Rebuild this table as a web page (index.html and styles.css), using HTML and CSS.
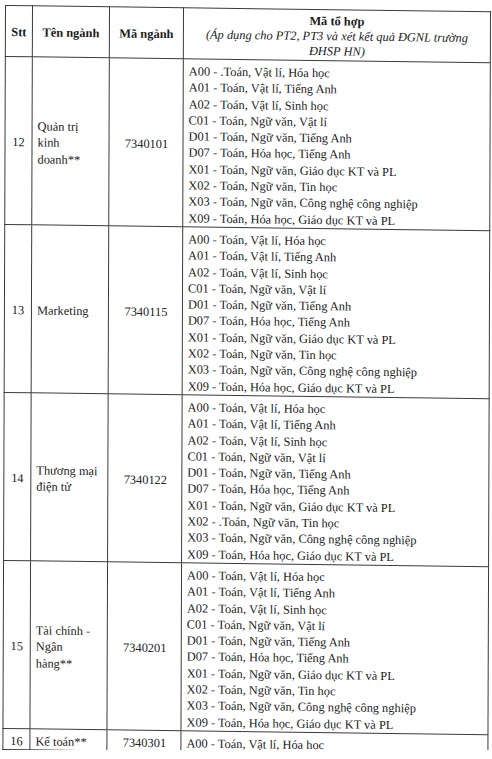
FILE: index.html
```html
<!DOCTYPE html>
<html lang="vi">
<head>
<meta charset="utf-8">
<title>Mã tổ hợp</title>
<link rel="stylesheet" href="styles.css">
</head>
<body>
<table class="grid">
  <colgroup>
    <col class="c-stt"><col class="c-name"><col class="c-code"><col class="c-combo">
  </colgroup>
  <thead>
    <tr>
      <th class="h-stt">Stt</th>
      <th>Tên ngành</th>
      <th>Mã ngành</th>
      <th class="h-combo"><b>Mã tổ hợp</b><br><i>(Áp dụng cho PT2, PT3 và xét kết quả ĐGNL trường<br>ĐHSP HN)</i></th>
    </tr>
  </thead>
  <tbody>
    <tr class="row">
      <td class="stt">12</td>
      <td class="name">Quản trị<br>kinh<br>doanh**</td>
      <td class="code">7340101</td>
      <td class="combo">
        <div>A00 - .Toán, Vật lí, Hóa học</div>
        <div>A01 - Toán, Vật lí, Tiếng Anh</div>
        <div>A02 - Toán, Vật lí, Sinh học</div>
        <div>C01 - Toán, Ngữ văn, Vật lí</div>
        <div>D01 - Toán, Ngữ văn, Tiếng Anh</div>
        <div>D07 - Toán, Hóa học, Tiếng Anh</div>
        <div>X01 - Toán, Ngữ văn, Giáo dục KT và PL</div>
        <div>X02 - Toán, Ngữ văn, Tin học</div>
        <div>X03 - Toán, Ngữ văn, Công nghệ công nghiệp</div>
        <div>X09 - Toán, Hóa học, Giáo dục KT và PL</div>
      </td>
    </tr>
    <tr class="row">
      <td class="stt">13</td>
      <td class="name">Marketing</td>
      <td class="code">7340115</td>
      <td class="combo">
        <div>A00 - Toán, Vật lí, Hóa học</div>
        <div>A01 - Toán, Vật lí, Tiếng Anh</div>
        <div>A02 - Toán, Vật lí, Sinh học</div>
        <div>C01 - Toán, Ngữ văn, Vật lí</div>
        <div>D01 - Toán, Ngữ văn, Tiếng Anh</div>
        <div>D07 - Toán, Hóa học, Tiếng Anh</div>
        <div>X01 - Toán, Ngữ văn, Giáo dục KT và PL</div>
        <div>X02 - Toán, Ngữ văn, Tin học</div>
        <div>X03 - Toán, Ngữ văn, Công nghệ công nghiệp</div>
        <div>X09 - Toán, Hóa học, Giáo dục KT và PL</div>
      </td>
    </tr>
    <tr class="row">
      <td class="stt">14</td>
      <td class="name">Thương mại<br>điện tử</td>
      <td class="code">7340122</td>
      <td class="combo">
        <div>A00 - Toán, Vật lí, Hóa học</div>
        <div>A01 - Toán, Vật lí, Tiếng Anh</div>
        <div>A02 - Toán, Vật lí, Sinh học</div>
        <div>C01 - Toán, Ngữ văn, Vật lí</div>
        <div>D01 - Toán, Ngữ văn, Tiếng Anh</div>
        <div>D07 - Toán, Hóa học, Tiếng Anh</div>
        <div>X01 - Toán, Ngữ văn, Giáo dục KT và PL</div>
        <div>X02 - .Toán, Ngữ văn, Tin học</div>
        <div>X03 - Toán, Ngữ văn, Công nghệ công nghiệp</div>
        <div>X09 - Toán, Hóa học, Giáo dục KT và PL</div>
      </td>
    </tr>
    <tr class="row">
      <td class="stt">15</td>
      <td class="name">Tài chính -<br>Ngân<br>hàng**</td>
      <td class="code">7340201</td>
      <td class="combo">
        <div>A00 - Toán, Vật lí, Hóa học</div>
        <div>A01 - Toán, Vật lí, Tiếng Anh</div>
        <div>A02 - Toán, Vật lí, Sinh học</div>
        <div>C01 - Toán, Ngữ văn, Vật lí</div>
        <div>D01 - Toán, Ngữ văn, Tiếng Anh</div>
        <div>D07 - Toán, Hóa học, Tiếng Anh</div>
        <div>X01 - Toán, Ngữ văn, Giáo dục KT và PL</div>
        <div>X02 - Toán, Ngữ văn, Tin học</div>
        <div>X03 - Toán, Ngữ văn, Công nghệ công nghiệp</div>
        <div>X09 - Toán, Hóa học, Giáo dục KT và PL</div>
      </td>
    </tr>
    <tr class="row">
      <td class="stt">16</td>
      <td class="name">Kế toán**</td>
      <td class="code">7340301</td>
      <td class="combo">
        <div>A00 - Toán, Vật lí, Hóa học</div>
      </td>
    </tr>
  </tbody>
</table>
</body>
</html>
```

FILE: styles.css
```css
html, body {
  margin: 0;
  padding: 0;
  background: #ffffff;
}

body {
  padding: 5px 0 0 5px;
  font-family: "Liberation Serif", "Times New Roman", serif;
  font-size: 12.4px;
  color: #1a1a1a;
}

.grid {
  border-collapse: collapse;
  table-layout: fixed;
  width: 485px;
  transform-origin: 0 0;
  transform: matrix(1, 0.013, -0.0035, 1, 0, 0);
}

.c-stt { width: 27px; }
.c-name { width: 77px; }
.c-code { width: 74px; }
.c-combo { width: 307px; }

.grid th,
.grid td {
  border: 1px solid #3a3a3a;
  vertical-align: middle;
}

.grid th {
  font-weight: bold;
  line-height: 15px;
  height: 45px;
  padding: 4px 4px 1px;
  text-align: center;
}

.grid th.h-combo {
  font-weight: normal;
}

.grid td {
  line-height: 16.3px;
  padding: 4px 4px 0 5px;
}

.stt {
  text-align: center;
  padding-left: 2px !important;
  padding-right: 2px !important;
}

.code {
  text-align: center;
}

.name {
  text-align: left;
}

.combo {
  text-align: left;
  white-space: nowrap;
}
```
